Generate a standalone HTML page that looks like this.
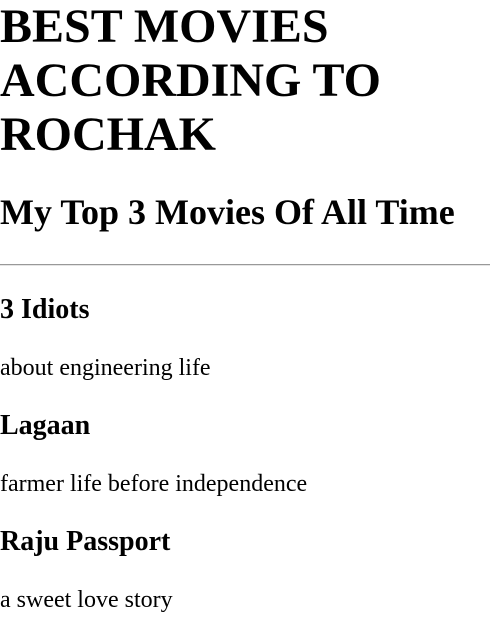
<!DOCTYPE html>
<html><head><meta charset="utf-8"><style>
body{margin:0;font-family:"Liberation Serif",serif;color:#000;background:#fff}
h1{font-size:48px;margin:0;line-height:54px;font-weight:bold}
h2{font-size:36px;margin:30px 0 31px;line-height:41px}
hr{margin:0 0 2px;border:0;border-top:1px solid #999;border-bottom:1px solid #e5e5e5}
h3{font-size:28px;margin:28px 0;line-height:32px}
p{font-size:24px;margin:28px 0;line-height:28px}
</style></head><body>
<h1>BEST MOVIES ACCORDING TO ROCHAK</h1>
<h2>My Top 3 Movies Of All Time</h2>
<hr>
<h3>3 Idiots</h3>
<p>about engineering life</p>
<h3>Lagaan</h3>
<p>farmer life before independence</p>
<h3>Raju Passport</h3>
<p>a sweet love story</p>
</body></html>
